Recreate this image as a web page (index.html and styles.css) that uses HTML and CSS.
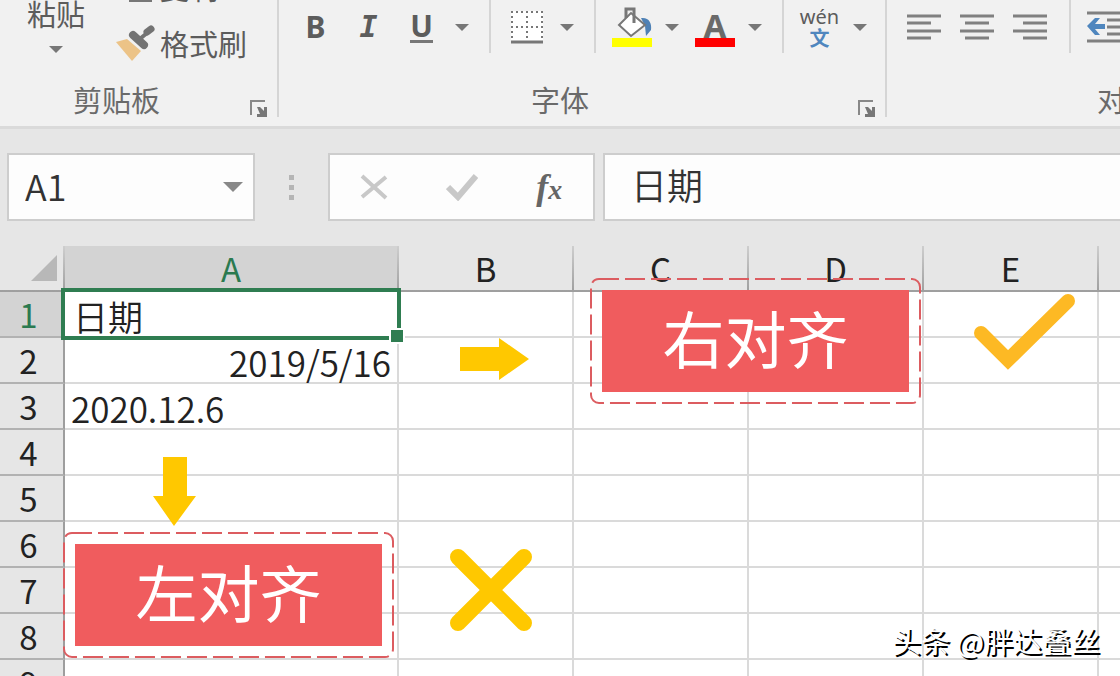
FILE: index.html
```
<!DOCTYPE html>
<html lang="zh-CN">
<head>
    <meta charset="UTF-8">
    <meta name="viewport" content="width=device-width, initial-scale=1.0">
    <title>日期对齐方式</title>
    <link rel="stylesheet" href="styles.css">
</head>
<body>
    <div class="ribbon">
        <section class="group">
            <div class="tools clipboard">
                <button class="paste-btn">
                    <span>粘贴</span>
                    <i class="caret"></i>
                </button>
                <div class="clipboard-list">
                    <button class="text-btn">
                        <svg width="40" height="40" viewBox="0 0 40 40">
                            <path d="M8 3h18v8M4 3v24h9" fill="none" stroke="#777" stroke-width="2"/>
                            <rect x="14" y="12" width="21" height="22" fill="#fff" stroke="#777" stroke-width="2"/>
                        </svg>
                        复制
                    </button>
                    <button class="text-btn">
                        <svg width="40" height="40" viewBox="0 0 40 40">
                            <path d="M0 19l11-3 14 12-9 10z" fill="#ecc387"/>
                            <path d="M25 15l6-5" stroke="#737373" stroke-width="4"/>
                            <path d="M17 12l11 10" stroke="#737373" stroke-width="8" stroke-linecap="round"/>
                            <path d="M31 9l4-3" stroke="#737373" stroke-width="7" stroke-linecap="round"/>
                        </svg>
                        格式刷
                    </button>
                </div>
            </div>
            <div class="group-footer">
                <span class="group-label">剪贴板</span>
                <button class="launcher" aria-label="剪贴板设置">
                    <svg width="17" height="17" viewBox="0 0 17 17">
                        <path d="M1 15V1h14" fill="none" stroke="#888" stroke-width="2"/>
                        <path d="M7 7h3l4 4V7h3v10H7v-3h3z" fill="#777"/>
                    </svg>
                </button>
            </div>
        </section>

        <section class="group">
            <div class="tools font-tools">
                <button class="tool bold">B</button>
                <button class="tool italic">I</button>
                <button class="tool underline"><span>U</span></button>
                <button class="drop" aria-label="下划线选项"><i class="caret"></i></button>
                <span class="divider"></span>
                <button class="tool" aria-label="边框">
                    <svg width="34" height="34" viewBox="0 0 34 34">
                        <rect x="1" y="1" width="32" height="30" fill="#fff"/>
                        <path d="M1 2h32M1 17h32M2 1v29M17 1v29M32 1v29" stroke="#777" stroke-width="2" stroke-dasharray="2 3"/>
                        <path d="M1 32h32" stroke="#777" stroke-width="3"/>
                    </svg>
                </button>
                <button class="drop" aria-label="边框选项"><i class="caret"></i></button>
                <span class="divider"></span>
                <button class="tool" aria-label="填充颜色">
                    <svg width="40" height="40" viewBox="0 0 40 40">
                        <path d="M29 11c8-1 11 5 10 12l-5 6-1-10z" fill="#4f81b5"/>
                        <path d="M7 18L19 6l14 12-14 11z" fill="#fff" stroke="#777" stroke-width="2"/>
                        <path d="M14 11V2h8v14" fill="none" stroke="#777" stroke-width="3"/>
                        <rect y="31" width="40" height="9" fill="#ff0"/>
                    </svg>
                </button>
                <button class="drop" aria-label="填充颜色选项"><i class="caret"></i></button>
                <button class="tool font-color" aria-label="字体颜色">
                    <svg width="40" height="40" viewBox="0 0 40 40">
                        <text class="color-letter" x="20" y="31" text-anchor="middle">A</text>
                        <rect y="31" width="40" height="9" fill="#f00"/>
                    </svg>
                </button>
                <button class="drop" aria-label="字体颜色选项"><i class="caret"></i></button>
                <span class="divider"></span>
                <button class="tool phonetic">
                    <span class="pinyin">wén</span>
                    <span class="hanzi">文</span>
                </button>
                <button class="drop" aria-label="拼音选项"><i class="caret"></i></button>
            </div>
            <div class="group-footer">
                <span class="group-label">字体</span>
                <button class="launcher" aria-label="字体设置">
                    <svg width="17" height="17" viewBox="0 0 17 17">
                        <path d="M1 15V1h14" fill="none" stroke="#888" stroke-width="2"/>
                        <path d="M7 7h3l4 4V7h3v10H7v-3h3z" fill="#777"/>
                    </svg>
                </button>
            </div>
        </section>

        <section class="group align-group">
            <div class="tools font-tools">
                <button class="tool" aria-label="左对齐">
                    <svg width="34" height="26" viewBox="0 0 34 26">
                        <path d="M0 2h34M0 9h24M0 17h34M0 24h24" stroke="#808080" stroke-width="3"/>
                    </svg>
                </button>
                <button class="tool" aria-label="居中">
                    <svg width="34" height="26" viewBox="0 0 34 26">
                        <path d="M0 2h34M5 9h24M0 17h34M5 24h24" stroke="#808080" stroke-width="3"/>
                    </svg>
                </button>
                <button class="tool" aria-label="右对齐">
                    <svg width="34" height="26" viewBox="0 0 34 26">
                        <path d="M0 2h34M10 9h24M0 17h34M10 24h24" stroke="#808080" stroke-width="3"/>
                    </svg>
                </button>
                <span class="divider"></span>
                <button class="tool" aria-label="减少缩进">
                    <svg width="40" height="32" viewBox="0 0 40 32">
                        <path d="M0 2h40M20 9h20M20 16h20M20 23h20M0 30h40" stroke="#808080" stroke-width="3"/>
                        <path d="M0 15l8-8h5l-5 6h10v5H8l5 6H8z" fill="#4f86be"/>
                    </svg>
                </button>
            </div>
            <div class="group-footer">
                <span class="group-label">对齐方式</span>
            </div>
        </section>
    </div>

    <div class="formula-bar">
        <div class="box name-box">
            <input type="text" value="A1" aria-label="名称框">
            <button class="drop" aria-label="名称列表"><i class="caret large"></i></button>
        </div>
        <div class="grip"><i></i><i></i><i></i></div>
        <div class="box entry-buttons">
            <button class="entry-btn" aria-label="取消">
                <svg width="28" height="26" viewBox="0 0 28 26">
                    <path d="M2 2l24 22M26 3L2 23" stroke="#c8c8c8" stroke-width="4"/>
                </svg>
            </button>
            <button class="entry-btn" aria-label="输入">
                <svg width="32" height="28" viewBox="0 0 32 28">
                    <path d="M2 14l10 10L30 3" fill="none" stroke="#c8c8c8" stroke-width="6"/>
                </svg>
            </button>
            <button class="entry-btn fx"><span>f<small>x</small></span></button>
        </div>
        <input class="box formula-input" type="text" value="日期" aria-label="编辑栏">
    </div>

    <main class="sheet">
        <table>
            <colgroup>
                <col class="col-head">
                <col class="col-a">
                <col class="col-std">
                <col class="col-std">
                <col class="col-std">
                <col class="col-std">
                <col>
            </colgroup>
            <thead>
                <tr>
                    <th class="corner">
                        <svg width="26" height="26" viewBox="0 0 26 26"><path d="M26 0v26H0z" fill="#b8b8b8"/></svg>
                    </th>
                    <th class="active">A</th>
                    <th>B</th>
                    <th>C</th>
                    <th>D</th>
                    <th>E</th>
                    <th></th>
                </tr>
            </thead>
            <tbody>
                <tr>
                    <th class="active">1</th>
                    <td class="selected">日期<span class="selection"></span></td>
                    <td></td><td></td><td></td><td></td><td></td>
                </tr>
                <tr><th>2</th><td class="right">2019/5/16</td><td></td><td></td><td></td><td></td><td></td></tr>
                <tr><th>3</th><td>2020.12.6</td><td></td><td></td><td></td><td></td><td></td></tr>
                <tr><th>4</th><td></td><td></td><td></td><td></td><td></td><td></td></tr>
                <tr><th>5</th><td></td><td></td><td></td><td></td><td></td><td></td></tr>
                <tr><th>6</th><td></td><td></td><td></td><td></td><td></td><td></td></tr>
                <tr><th>7</th><td></td><td></td><td></td><td></td><td></td><td></td></tr>
                <tr><th>8</th><td></td><td></td><td></td><td></td><td></td><td></td></tr>
                <tr><th>9</th><td></td><td></td><td></td><td></td><td></td><td></td></tr>
            </tbody>
        </table>

        <!-- notes drawn over the cells -->
        <div class="callout callout-right">
            <svg class="dashes"><rect x="1" y="1" rx="8"/></svg>
            <span>右对齐</span>
        </div>
        <div class="callout callout-left">
            <svg class="dashes"><rect x="1" y="1" rx="8"/></svg>
            <span>左对齐</span>
        </div>
        <svg class="mark arrow-right" width="69" height="42" viewBox="0 0 69 42">
            <path d="M0 9h39V0l30 21-30 21v-9H0z" fill="#ffc800"/>
        </svg>
        <svg class="mark arrow-down" width="43" height="69" viewBox="0 0 43 69">
            <path d="M10 0h24v39h9L21 69 0 39h10z" fill="#ffc800"/>
        </svg>
        <svg class="mark check" width="102" height="78" viewBox="0 0 102 78">
            <path d="M7 40l27 27L94 8" fill="none" stroke="#fdb924" stroke-width="14" stroke-linecap="round"/>
        </svg>
        <svg class="mark cross" width="83" height="82" viewBox="0 0 83 82">
            <path d="M8 8l66 66M74 8L8 74" stroke="#ffc800" stroke-width="16" stroke-linecap="round"/>
        </svg>
    </main>

    <div class="watermark">头条 @胖达叠丝</div>
</body>
</html>
```

FILE: styles.css
```
*,
*::after {
    margin: 0;
    padding: 0;
    box-sizing: border-box;
}

body {
    display: flex;
    flex-direction: column;
    height: 100vh;
    overflow: hidden;
    position: relative;
    background: #e6e6e6;
    color: #222;
    font-family: 'Noto Sans CJK SC', 'Noto Sans', sans-serif;
}

button,
input {
    border: none;
    background: none;
    font-family: inherit;
    color: inherit;
}

svg {
    display: block;
    flex-shrink: 0;
}

/* Ribbon */
.ribbon {
    display: flex;
    flex-shrink: 0;
    overflow: hidden;
    background: #f1f1f1;
    border-bottom: 3px solid #dadada;
    padding-bottom: 9px;
    color: #5c5c5c;
}

.group {
    flex-shrink: 0;
    border-right: 2px solid #d5d5d5;
}

.align-group {
    width: 582px;
}

.tools {
    display: flex;
    height: 78px;
}

.clipboard {
    width: 277px;
    padding-left: 26px;
    gap: 30px;
}

.paste-btn {
    display: flex;
    flex-direction: column;
    align-items: center;
    width: 60px;
    height: 53px;
    gap: 13px;
    justify-content: flex-end;
    font-size: 29px;
    line-height: 40px;
}

.clipboard-list {
    display: flex;
    flex-direction: column;
    justify-content: flex-end;
    height: 65px;
    gap: 12px;
}

.text-btn {
    display: flex;
    align-items: center;
    flex-shrink: 0;
    gap: 4px;
    height: 44px;
    font-size: 29px;
    line-height: 44px;
}

.caret {
    display: block;
    border: 7px solid transparent;
    border-top-color: #777;
    border-bottom: none;
}

.caret.large {
    border-width: 10px;
    border-top-color: #888;
    border-bottom: none;
}

.font-tools {
    align-items: flex-start;
    padding: 0 11px 0 10px;
}

.tool,
.drop {
    display: flex;
    align-items: center;
    justify-content: center;
    height: 54px;
    flex-shrink: 0;
}

.tool {
    width: 53px;
    font-size: 30px;
    line-height: 30px;
}

.drop {
    width: 28px;
}

.divider {
    width: 2px;
    height: 53px;
    margin: 0 9px 0 13px;
    background: #d5d5d5;
}

.bold,
.underline {
    font-family: 'Noto Sans', sans-serif;
    font-weight: bold;
}

.italic {
    font-family: 'DejaVu Sans Mono', monospace;
    font-style: italic;
    font-weight: bold;
}

.underline span {
    line-height: 28px;
    border-bottom: 3px solid #777;
}

.font-color {
    margin-left: 2px;
}

.color-letter {
    font: bold 33px 'Noto Sans', sans-serif;
    fill: #6a6a6a;
}

.phonetic {
    flex-direction: column;
}

.pinyin {
    font-family: 'Noto Sans', sans-serif;
    font-size: 20px;
    line-height: 22px;
}

.hanzi {
    color: #4f86be;
    font-size: 20px;
    font-weight: bold;
    line-height: 20px;
}

.group-footer {
    display: flex;
    align-items: flex-end;
    height: 39px;
}

.group-label {
    flex: 1;
    padding-right: 17px;
    text-align: center;
    font-size: 29px;
    line-height: 36px;
    color: #6a6a6a;
}

.align-group .group-label {
    padding-right: 44px;
}

.launcher {
    margin-right: 10px;
}

/* Formula bar */
.formula-bar {
    display: flex;
    flex-shrink: 0;
    align-items: center;
    padding: 24px 0 25px 7px;
    color: #333;
}

.box {
    height: 68px;
    background: #fdfdfd;
    border: 2px solid #cdcdcd;
}

.name-box {
    display: flex;
    align-items: center;
    width: 248px;
    padding: 0 6px 0 16px;
}

.name-box input {
    flex: 1;
    min-width: 0;
    padding-bottom: 4px;
    font-size: 36px;
    font-weight: 350;
    line-height: 48px;
}

.grip {
    display: flex;
    flex-direction: column;
    align-items: center;
    gap: 5px;
    width: 73px;
}

.grip i {
    width: 5px;
    height: 5px;
    background: #b5b5b5;
}

.entry-buttons {
    display: flex;
    width: 267px;
    margin-right: 8px;
}

.entry-btn {
    display: flex;
    flex: 1;
    align-items: center;
    justify-content: center;
}

.fx {
    font-family: 'Liberation Serif', serif;
    font-style: italic;
    font-weight: bold;
    font-size: 36px;
    color: #666;
}

.fx small {
    font-size: 28px;
}

.formula-input {
    flex: 1;
    min-width: 0;
    padding: 0 0 6px 26px;
    border-right: none;
    font-size: 36px;
    font-weight: 350;
}

/* Sheet */
.sheet {
    position: relative;
    flex: 1;
}

table {
    width: 100%;
    table-layout: fixed;
    border-collapse: separate;
    border-spacing: 0;
}

.col-head {
    width: 65px;
}

.col-a {
    width: 334px;
}

.col-std {
    width: 175px;
}

tr {
    height: 46px;
}

th,
td {
    height: 46px;
    line-height: 44px;
    white-space: nowrap;
}

th {
    font-size: 33px;
    font-weight: normal;
    background: #e6e6e6;
}

thead th {
    border-bottom: 2px solid #9e9e9e;
    border-right: 2px solid;
    border-image: linear-gradient(#d0d0d0, #9e9e9e) 2;
    border-top: none;
    border-left: none;
}

tbody th {
    padding-right: 6px;
    border-right: 2px solid #9e9e9e;
    border-bottom: 2px solid #b2b2b2;
}

th.active {
    background: #d3d3d3;
    color: #2b7a50;
}

.corner svg {
    margin-left: 31px;
}

td {
    padding: 4px 6px 0;
    background: #fff;
    border-right: 2px solid #dadada;
    border-bottom: 2px solid #dadada;
    font-size: 35px;
    font-weight: 350;
    line-height: 40px;
}

th:last-child,
td:last-child {
    border-right: none;
}

td.right {
    text-align: right;
}

.selected {
    position: relative;
    padding-left: 8px;
}

.selection {
    position: absolute;
    inset: -4px;
    border: 4px solid #2f7d51;
}

.selection::after {
    content: '';
    position: absolute;
    right: -8px;
    bottom: -8px;
    width: 16px;
    height: 16px;
    background: #2f7d51;
    border: 2px solid #fff;
}

/* Notes over the sheet */
.callout,
.mark {
    position: absolute;
}

.callout {
    width: 331px;
    height: 126px;
    padding: 12px;
}

.callout span {
    display: block;
    padding-bottom: 8px;
    background: #f05c5e;
    color: #fff;
    font-size: 62px;
    line-height: 94px;
    text-align: center;
}

.dashes {
    position: absolute;
    inset: 0;
    width: 100%;
    height: 100%;
}

.dashes rect {
    width: calc(100% - 2px);
    height: calc(100% - 2px);
    fill: none;
    stroke: #dc5c60;
    stroke-width: 2px;
    stroke-dasharray: 20 6;
}

.callout-right {
    left: 590px;
    top: 32px;
}

.callout-left {
    left: 63px;
    top: 286px;
}

.arrow-right {
    left: 460px;
    top: 92px;
}

.arrow-down {
    left: 153px;
    top: 211px;
}

.check {
    left: 974px;
    top: 47px;
}

.cross {
    left: 450px;
    top: 303px;
}

.watermark {
    position: absolute;
    right: 20px;
    bottom: 16px;
    color: #fff;
    font-size: 29px;
    line-height: 40px;
    text-shadow: 2px 2px 0 #000;
}
```
